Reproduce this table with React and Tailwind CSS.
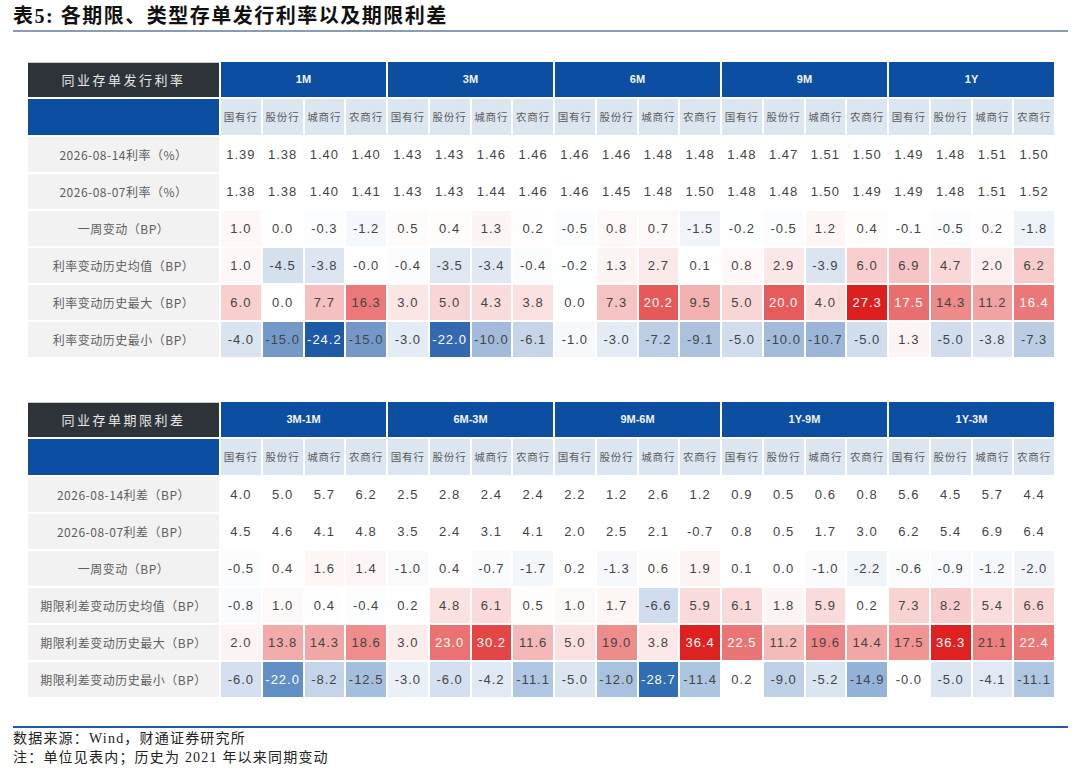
import React from 'react';

const banks = ['国有行', '股份行', '城商行', '农商行'];

const rateTable = {
  title: '同业存单发行利率',
  groups: ['1M', '3M', '6M', '9M', '1Y'],
  redEnd: [221, 31, 31],
  blueEnd: [31, 90, 168],
  rows: [
    ['2026-08-14利率（%）', '1.39 1.38 1.40 1.40 1.43 1.43 1.46 1.46 1.46 1.46 1.48 1.48 1.48 1.47 1.51 1.50 1.49 1.48 1.51 1.50'],
    ['2026-08-07利率（%）', '1.38 1.38 1.40 1.41 1.43 1.43 1.44 1.46 1.46 1.45 1.48 1.50 1.48 1.48 1.50 1.49 1.49 1.48 1.51 1.52'],
    ['一周变动（BP）', '1.0 0.0 -0.3 -1.2 0.5 0.4 1.3 0.2 -0.5 0.8 0.7 -1.5 -0.2 -0.5 1.2 0.4 -0.1 -0.5 0.2 -1.8'],
    ['利率变动历史均值（BP）', '1.0 -4.5 -3.8 -0.0 -0.4 -3.5 -3.4 -0.4 -0.2 1.3 2.7 0.1 0.8 2.9 -3.9 6.0 6.9 4.7 2.0 6.2'],
    ['利率变动历史最大（BP）', '6.0 0.0 7.7 16.3 3.0 5.0 4.3 3.8 0.0 7.3 20.2 9.5 5.0 20.0 4.0 27.3 17.5 14.3 11.2 16.4'],
    ['利率变动历史最小（BP）', '-4.0 -15.0 -24.2 -15.0 -3.0 -22.0 -10.0 -6.1 -1.0 -3.0 -7.2 -9.1 -5.0 -10.0 -10.7 -5.0 1.3 -5.0 -3.8 -7.3'],
  ],
};

const spreadTable = {
  title: '同业存单期限利差',
  groups: ['3M-1M', '6M-3M', '9M-6M', '1Y-9M', '1Y-3M'],
  redEnd: [223, 32, 32],
  blueEnd: [47, 109, 180],
  rows: [
    ['2026-08-14利差（BP）', '4.0 5.0 5.7 6.2 2.5 2.8 2.4 2.4 2.2 1.2 2.6 1.2 0.9 0.5 0.6 0.8 5.6 4.5 5.7 4.4'],
    ['2026-08-07利差（BP）', '4.5 4.6 4.1 4.8 3.5 2.4 3.1 4.1 2.0 2.5 2.1 -0.7 0.8 0.5 1.7 3.0 6.2 5.4 6.9 6.4'],
    ['一周变动（BP）', '-0.5 0.4 1.6 1.4 -1.0 0.4 -0.7 -1.7 0.2 -1.3 0.6 1.9 0.1 0.0 -1.0 -2.2 -0.6 -0.9 -1.2 -2.0'],
    ['期限利差变动历史均值（BP）', '-0.8 1.0 0.4 -0.4 0.2 4.8 6.1 0.5 1.0 1.7 -6.6 5.9 6.1 1.8 5.9 0.2 7.3 8.2 5.4 6.6'],
    ['期限利差变动历史最大（BP）', '2.0 13.8 14.3 18.6 3.0 23.0 30.2 11.6 5.0 19.0 3.8 36.4 22.5 11.2 19.6 14.4 17.5 36.3 21.1 22.4'],
    ['期限利差变动历史最小（BP）', '-6.0 -22.0 -8.2 -12.5 -3.0 -6.0 -4.2 -11.1 -5.0 -12.0 -28.7 -11.4 0.2 -9.0 -5.2 -14.9 -0.0 -5.0 -4.1 -11.1'],
  ],
};

// colour scale: white -> red for positive, white -> blue for negative (whole table)
const mix = (end, t) =>
  `rgb(${end.map((c) => Math.round(255 - t * (255 - c))).join(',')})`;

const DataTable = ({ data }) => {
  const colored = data.rows.slice(2).flatMap(([, v]) => v.split(' ').map(Number));
  const max = Math.max(...colored);
  const min = Math.min(...colored);

  return (
    <div className="grid w-[1026px] grid-cols-[191px_repeat(20,minmax(0,1fr))] gap-[2px] font-['Liberation_Sans','Noto_Sans_CJK_SC',sans-serif]">
      {/* header */}
      <div className="h-[35px] bg-[#2e333a] border-t border-[#c9c9c9] flex items-center justify-center text-[13px] tracking-[2.5px] text-[#e6e6e6] font-['Noto_Sans_CJK_SC',sans-serif]">
        {data.title}
      </div>
      {data.groups.map((g) => (
        <div
          key={g}
          className="col-span-4 h-[35px] bg-[#0b4ea2] flex items-center justify-center text-[11px] font-bold text-[#f4f4f4]"
        >
          {g}
        </div>
      ))}

      {/* sub header */}
      <div className="h-[36px] bg-[#0b4ea2]" />
      {data.groups.flatMap((g) =>
        banks.map((b) => (
          <div
            key={g + b}
            className="h-[36px] bg-[#dce6f1] flex items-center justify-center text-[10.5px] tracking-[1px] text-[#5a5a5a] font-['Noto_Sans_CJK_SC',sans-serif]"
          >
            {b}
          </div>
        ))
      )}

      {/* body */}
      {data.rows.map(([label, values], r) => (
        <React.Fragment key={label}>
          <div className="h-[35px] bg-[#f2f2f2] flex items-center justify-center text-[12px] tracking-[0.5px] text-[#5e5e5e] font-['Noto_Sans_CJK_SC',sans-serif]">
            {label}
          </div>
          {values.split(' ').map((v, i) => {
            const n = Number(v);
            let bg = '#ffffff';
            let light = false;
            if (r >= 2) {
              if (n > 0) {
                const t = n / max;
                bg = mix(data.redEnd, t);
                light = t >= 0.6;
              } else if (n < 0) {
                const t = n / min;
                bg = mix(data.blueEnd, t);
                light = t >= 0.7;
              }
            }
            return (
              <div
                key={i}
                className={`h-[35px] flex items-center justify-center text-[13px] tracking-[1px] ${
                  light ? 'text-white' : 'text-[#444]'
                }`}
                style={{ backgroundColor: bg }}
              >
                {v}
              </div>
            );
          })}
        </React.Fragment>
      ))}
    </div>
  );
};

const App = () => {
  return (
    <div className="w-[1080px] h-[770px] bg-white overflow-hidden">
      {/* Title */}
      <div className="pl-[13px] pr-[12px] pt-[3px]">
        <h1 className="text-[20px] leading-[26px] font-bold tracking-[1.5px] text-[#111] font-['Liberation_Serif','Noto_Sans_CJK_SC',serif]">
          表5: 各期限、类型存单发行利率以及期限利差
        </h1>
        <div className="mt-[1px] h-[2px] bg-[#8a9bb5]" />
      </div>

      {/* Tables */}
      <div className="ml-[28px] mt-[30px]">
        <DataTable data={rateTable} />
      </div>
      <div className="ml-[28px] mt-[45px]">
        <DataTable data={spreadTable} />
      </div>

      {/* Footer */}
      <div className="pl-[13px] pr-[12px] mt-[29px]">
        <div className="h-[2px] bg-[#2457a8]" />
        <div className="pt-[1px] text-[14px] leading-[19px] tracking-[1.2px] text-[#222] font-['Liberation_Serif','Noto_Sans_CJK_SC',serif]">
          <p>数据来源：Wind，财通证券研究所</p>
          <p>注：单位见表内；历史为 2021 年以来同期变动</p>
        </div>
      </div>
    </div>
  );
};

export default App;
